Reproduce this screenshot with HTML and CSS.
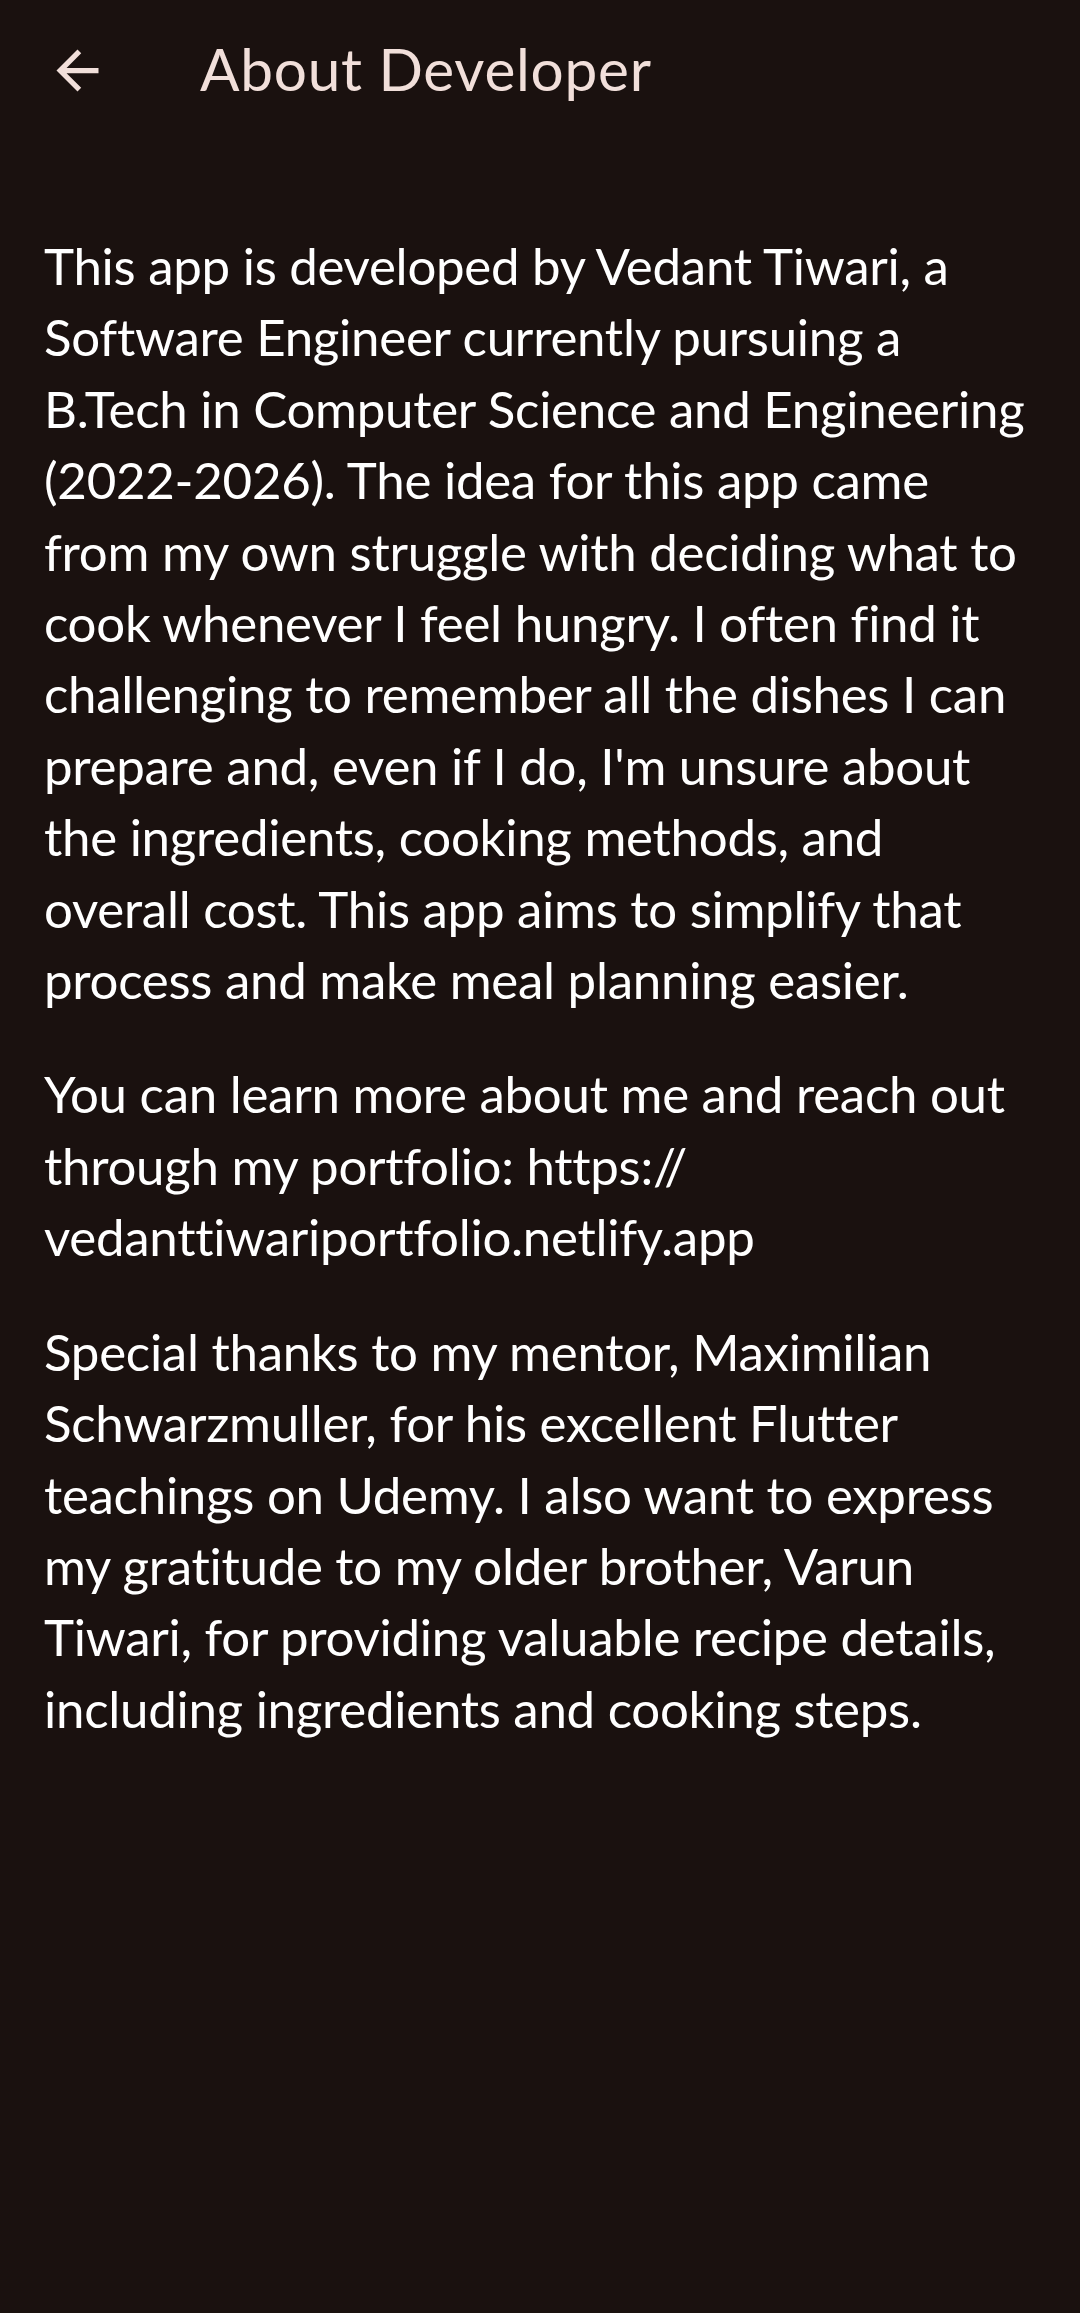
FILE: index.html
```html
<!DOCTYPE html>
<html lang="en">
<head>
<meta charset="utf-8">
<title>About Developer</title>
<link rel="stylesheet" href="styles.css">
</head>
<body>
<div class="screen">
  <header class="appbar">
    <button class="back" aria-label="Back">
      <svg viewBox="0 0 24 24" width="63" height="63"><path d="M20 11H7.83l5.59-5.59L12 4l-8 8 8 8 1.41-1.41L7.83 13H20v-2z" fill="currentColor"/></svg>
    </button>
    <h1 class="title">About Developer</h1>
  </header>
  <main class="content">
    <p>This app is developed by Vedant Tiwari, a Software Engineer currently pursuing a B.Tech in Computer Science and Engineering (2022-2026). The idea for this app came from my own struggle with deciding what to cook whenever I feel hungry. I often find it challenging to remember all the dishes I can prepare and, even if I do, I'm unsure about the ingredients, cooking methods, and overall cost. This app aims to simplify that process and make meal planning easier.</p>
    <p>You can learn more about me and reach out through my portfolio: https:// vedanttiwariportfolio.netlify.app</p>
    <p>Special thanks to my mentor, Maximilian Schwarzmuller, for his excellent Flutter teachings on Udemy. I also want to express my gratitude to my older brother, Varun Tiwari, for providing valuable recipe details, including ingredients and cooking steps.</p>
  </main>
</div>
</body>
</html>
```
FILE: styles.css
```css
html, body {
  margin: 0;
  padding: 0;
  background: #1a110f;
}
body {
  font-family: Lato, "Noto Sans", sans-serif;
  font-variant-ligatures: none;
  width: 1080px;
  min-height: 2313px;
}
.screen {
  display: flex;
  flex-direction: column;
}
.appbar {
  height: 147px;
  display: flex;
  align-items: center;
  color: #f1dfda;
}
.back {
  width: 147px;
  height: 147px;
  display: flex;
  align-items: center;
  justify-content: center;
  background: none;
  border: 0;
  padding: 0;
  color: #f1dfda;
  margin-left: 4px;
  margin-top: -6px;
}
.title {
  margin: -10px 0 0 49px;
  font-size: 58.5px;
  font-weight: 400;
  letter-spacing: 0.75px;
  line-height: 69px;
}
.content {
  padding: 83px 40px 0 44px;
  color: #ffffff;
}
.content p {
  margin: 0 0 43px 0;
  font-size: 51px;
  letter-spacing: -0.27px;
  line-height: 71.4px;
}
```
